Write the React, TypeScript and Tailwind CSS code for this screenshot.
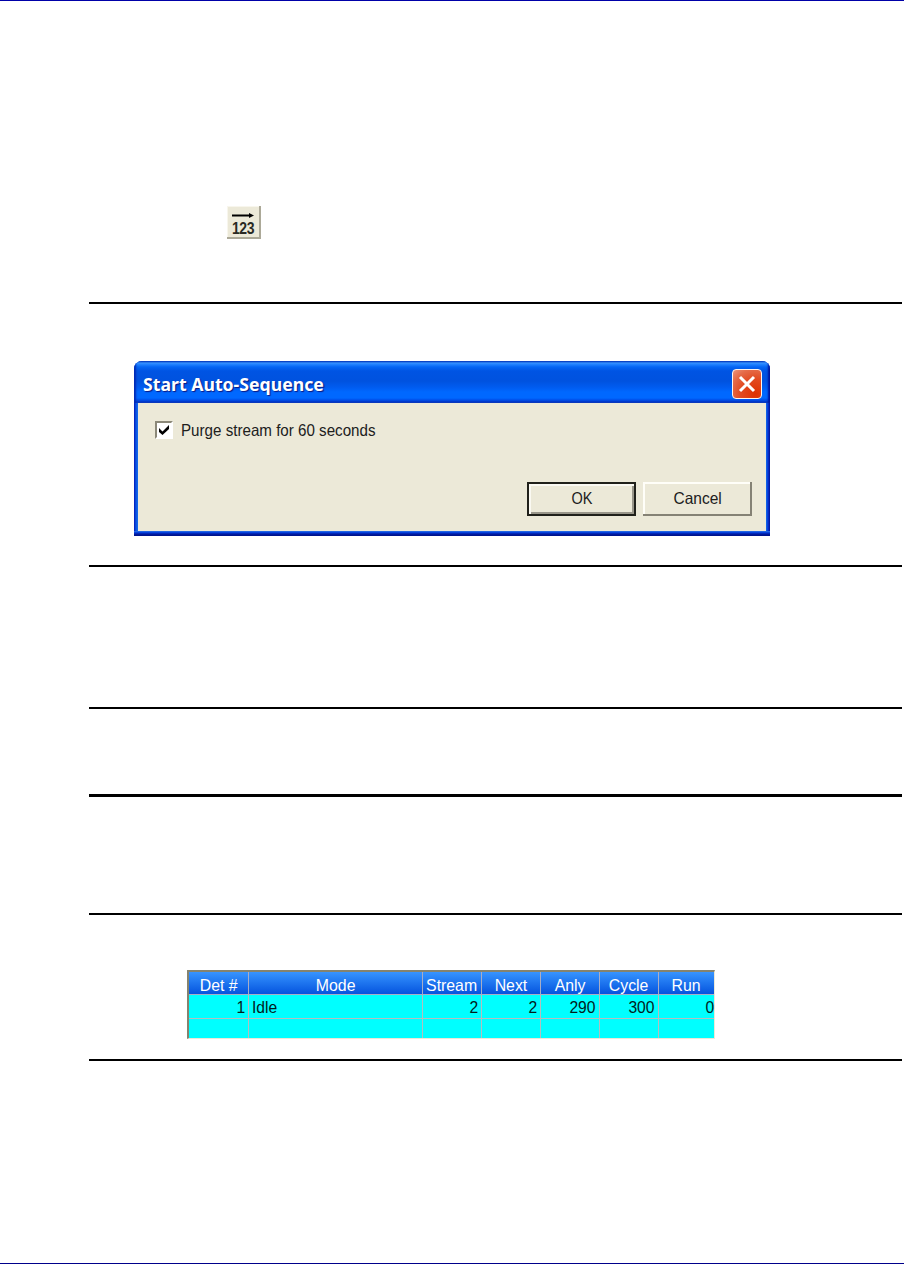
import React from "react";

const columns = [
  { label: "Det #", value: "1" },
  { label: "Mode", value: "Idle" },
  { label: "Stream", value: "2" },
  { label: "Next", value: "2" },
  { label: "Anly", value: "290" },
  { label: "Cycle", value: "300" },
  { label: "Run", value: "0" },
];

function Rule({ className = "" }: { className?: string }) {
  return <div className={`ml-[89px] w-[813px] shrink-0 bg-black ${className}`} />;
}

function SequenceButton() {
  return (
    <button
      aria-label="Auto sequence"
      className="ml-[227px] mt-[205px] flex h-[33px] w-[34px] shrink-0 flex-col items-center border-b-2 border-r-2 border-[#aca998] bg-[#ece9d8] pt-[6px] shadow-[inset_1px_1px_0_#f8f6ed]"
    >
      <svg className="shrink-0" width="22" height="7" viewBox="0 0 22 7">
        <path d="M0 3.5H18" stroke="#000" strokeWidth="2" />
        <path d="M17 1L22 3.5L17 6Z" fill="#000" />
      </svg>
      <span className="mt-[2px] inline-block scale-y-[1.15] text-[14px] font-bold leading-[15px] text-[#292923] [letter-spacing:-0.5px]">123</span>
    </button>
  );
}

function Dialog() {
  return (
    <section className="ml-[134px] mt-[57px] flex h-[175px] w-[636px] shrink-0 flex-col overflow-hidden rounded-t-[8px] bg-[linear-gradient(90deg,#001ca8_0,#0831d9_1px,#0855dd_2px,#166aee_4px,#166aee_632px,#0855dd_633px,#0831d9_634px,#00138c_636px)]">
      <header className="flex h-[42px] shrink-0 items-center justify-between bg-[linear-gradient(180deg,#0855cf_0,#3991ff_2px,#2586ff_3px,#0465f4_6px,#0054e3_10px,#0052df_20px,#005bef_26px,#0068ff_31px,#0068ff_37px,#004ee8_39px,#0038c9_41px,#2860d0_42px)] pl-[9px] pr-[8px] shadow-[inset_2px_0_2px_#002bb5,inset_-2px_0_2px_#00139b]">
        <h1 className="origin-left scale-x-[1.01] whitespace-nowrap pt-[3px] font-['Noto_Sans'] text-[17.5px] font-bold leading-[24px] text-white [text-shadow:1px_1px_1px_#0a1883]">
          Start Auto-Sequence
        </h1>
        <button
          aria-label="Close"
          className="mt-[3px] flex h-[30px] w-[30px] items-center justify-center rounded-[4px] border border-[#fff4ee] bg-[radial-gradient(circle_at_80%_85%,#df3100_0,#e24a20_45%,#e56b49_75%,#ec967e_100%)]"
        >
          <svg width="18" height="18" viewBox="0 0 18 18">
            <path d="M2 2L16 16M16 2L2 16" stroke="#fff" strokeWidth="3" />
          </svg>
        </button>
      </header>
      <div className="ml-[4px] flex h-[128px] w-[628px] shrink-0 flex-col bg-[#ece9d8] text-[#20201c]">
        <label className="ml-[17px] mt-[17px] flex h-[20px] items-center">
          <span className="flex h-[18px] w-[18px] items-center justify-center border-2 border-b-white border-l-[#8b8878] border-r-white border-t-[#8b8878] bg-white">
            <svg width="12" height="12" viewBox="0 0 12 12">
              <path d="M1 4L4.5 7.5L11 1V5L4.5 11L1 8Z" fill="#000" />
            </svg>
          </span>
          <span className="ml-[8px] origin-left scale-x-[0.918] whitespace-nowrap text-[16.5px] leading-[20px]">Purge stream for 60 seconds</span>
        </label>
        <div className="ml-[389px] mt-[42px] flex gap-[7px]">
          <button className="flex h-[34px] w-[109px] items-center justify-center border-2 border-[#20201a] text-[16.5px] shadow-[inset_2px_2px_0_#faf9f2,inset_-2px_-2px_0_#99968a]">
            <span className="inline-block -translate-y-[1px] scale-x-[0.88]">OK</span>
          </button>
          <button className="flex h-[34px] w-[109px] items-center justify-center text-[16.5px] shadow-[inset_-2px_-2px_0_#858275,inset_2px_2px_0_#fffef8]">
            <span className="inline-block -translate-y-[1px] scale-x-[0.94]">Cancel</span>
          </button>
        </div>
      </div>
      <div className="h-[5px] shrink-0 bg-[linear-gradient(180deg,#3d78df_0,#0953e7_1px,#0332d1_2px,#001da0_3px,#001087_5px)]" />
    </section>
  );
}

function StatusTable() {
  return (
    <div className="ml-[187px] mt-[55px] h-[69px] w-[528px] shrink-0 border-b border-l-2 border-r border-t-2 border-b-[#ece9d8] border-l-[#85836f] border-r-[#ece9d8] border-t-[#85836f]">
      <table className="w-[525px] table-fixed border-separate border-spacing-0 text-[16.5px] leading-[20px]">
        <colgroup>
          <col className="w-[60px]" />
          <col className="w-[174px]" />
          <col className="w-[59px]" />
          <col className="w-[59px]" />
          <col className="w-[59px]" />
          <col className="w-[59px]" />
          <col className="w-[55px]" />
        </colgroup>
        <thead>
          <tr className="h-[23px]">
            {columns.map((column) => (
              <th key={column.label} className="whitespace-nowrap border-b border-r border-[#a9adc5] bg-linear-to-b from-[#3794ff] to-[#0653de] p-0 pt-[2px] text-center font-normal text-white last:border-r-0">
                <span className="inline-block translate-y-[1px] scale-x-[0.96]">{column.label}</span>
              </th>
            ))}
          </tr>
        </thead>
        <tbody className="text-[#001c1c]">
          <tr className="h-[24px]">
            {columns.map((column) => (
              <td key={column.label} className={`border-b border-r border-[#b5bdbd] bg-[#00ffff] p-0 last:border-r-0 ${column.label === "Mode" ? "pl-[3px] text-left" : column.label === "Run" ? "text-right" : "pr-[3px] text-right"}`}>
                <span className={`inline-block scale-x-[0.95] ${column.label === "Mode" ? "origin-left" : "origin-right"}`}>{column.value}</span>
              </td>
            ))}
          </tr>
          <tr className="h-[19px]">
            {columns.map((column) => (
              <td key={column.label} className="border-r border-[#b5bdbd] bg-[#00ffff] p-0 last:border-r-0" />
            ))}
          </tr>
        </tbody>
      </table>
    </div>
  );
}

export default function App() {
  return (
    <main className="flex h-[1264px] w-[904px] flex-col overflow-hidden border-b border-t border-b-[#00008b] border-t-[#0000a8] bg-white font-['Liberation_Sans',sans-serif]">
      <SequenceButton />
      <Rule className="mt-[63px] h-[2px]" />
      <Dialog />
      <Rule className="mt-[29px] h-[2px]" />
      <Rule className="mt-[140px] h-[2px]" />
      <Rule className="mt-[85px] h-[3px]" />
      <Rule className="mt-[116px] h-[2px]" />
      <StatusTable />
      <Rule className="mt-[20px] h-[2px]" />
    </main>
  );
}
